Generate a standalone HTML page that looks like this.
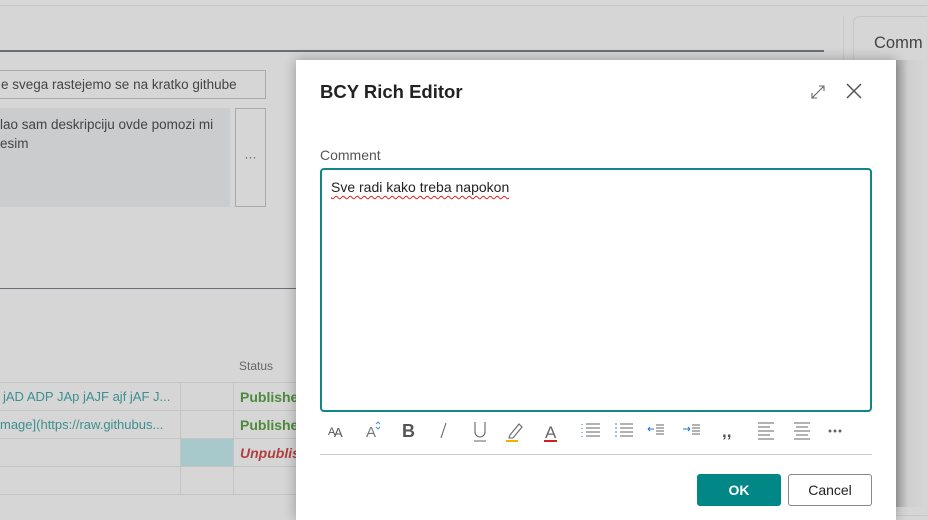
<!DOCTYPE html>
<html><head><meta charset="utf-8">
<style>
*{box-sizing:border-box;margin:0;padding:0}
body{width:927px;height:507px;overflow:hidden;background:#d6d6d6;font-family:"Liberation Sans",sans-serif;position:relative}
.abs{position:absolute}
.bg-t{color:#444;font-size:13.5px}
</style></head><body>
<div class="abs" style="left:0;top:0;width:927px;height:6px;border-bottom:1px solid #c6c6c6;background:#d8d8d8"></div>
<div class="abs" style="left:0;top:50px;width:824px;height:2px;background:#6b6f78"></div>
<div class="abs" style="left:843px;top:16px;width:1px;height:491px;background:#c8c8c8"></div>
<div class="abs" style="left:853px;top:16px;width:80px;height:500px;border:1px solid #c6c6c6;border-radius:6px;background:#d6d6d6"></div>
<div class="abs" style="left:874px;top:34px;font-size:16.5px;color:#444">Comm</div>
<div class="abs bg-t" style="left:-2px;top:70px;width:268px;height:29px;border:1px solid #aaa;padding:6px 0 0 2px">e svega rastejemo se na kratko githube</div>
<div class="abs bg-t" style="left:0;top:108px;width:230px;height:99px;background:#cbcccd;padding:7px 0 0 0;line-height:19px">lao sam deskripciju ovde pomozi mi<br>esim</div>
<div class="abs" style="left:235px;top:108px;width:31px;height:99px;border:1px solid #aaa;text-align:center;line-height:96px;color:#555;font-size:12px">···</div>
<div class="abs" style="left:0;top:288px;width:300px;height:1px;background:#6b6f78"></div>
<div class="abs" style="left:239px;top:359px;font-size:12px;color:#666">Status</div>
<div class="abs" style="left:0;top:382px;width:300px;height:1px;background:#c4c4c4"></div>
<div class="abs" style="left:0;top:410px;width:300px;height:1px;background:#c4c4c4"></div>
<div class="abs" style="left:0;top:438px;width:300px;height:1px;background:#c4c4c4"></div>
<div class="abs" style="left:0;top:466px;width:300px;height:1px;background:#c4c4c4"></div>
<div class="abs" style="left:0;top:494px;width:300px;height:1px;background:#c4c4c4"></div>
<div class="abs" style="left:180px;top:382px;width:1px;height:112px;background:#c4c4c4"></div>
<div class="abs" style="left:233px;top:382px;width:1px;height:112px;background:#c4c4c4"></div>
<div class="abs" style="left:181px;top:439px;width:52px;height:27px;background:#a7c9cc"></div>
<div class="abs" style="left:3px;top:389px;font-size:13px;color:#3e8e8e;white-space:nowrap">jAD ADP JAp jAJF ajf jAF J...</div>
<div class="abs" style="left:0;top:417px;font-size:13px;color:#3e8e8e;white-space:nowrap">mage](https://raw.githubus...</div>
<div class="abs" style="left:240px;top:389px;font-size:14px;font-weight:bold;color:#4c8a3c">Published</div>
<div class="abs" style="left:240px;top:417px;font-size:14px;font-weight:bold;color:#4c8a3c">Published</div>
<div class="abs" style="left:240px;top:445px;font-size:14px;font-weight:bold;font-style:italic;color:#b04040">Unpublished</div>

<div class="abs" style="left:896px;top:60px;width:30px;height:447px;background:linear-gradient(90deg,#a8a8a8,#cfcfcf 40%,#d6d6d6)"></div>
<div class="abs" style="left:296px;top:60px;width:600px;height:460px;background:#fff;box-shadow:0 0 12px rgba(0,0,0,.3)">
  <div class="abs" style="left:24px;top:21px;font-size:18.5px;font-weight:bold;color:#222">BCY Rich Editor</div>
  <svg class="abs" style="left:513px;top:23px" width="18" height="18" viewBox="0 0 18 18" fill="none" stroke="#666" stroke-width="1.1"><path d="M3 15L15 3M10 3h5v5M3 10v5h5"/></svg>
  <svg class="abs" style="left:549px;top:22px" width="18" height="18" viewBox="0 0 18 18" stroke="#555" stroke-width="1.5"><path d="M2 2L16 16M16 2L2 16"/></svg>
  <div class="abs" style="left:24px;top:87px;font-size:14px;color:#555">Comment</div>
  <div class="abs" style="left:24px;top:108px;width:552px;height:244px;border:2px solid #128585;border-radius:4px;padding:9px 9px;font-size:14px;color:#222"><span style="text-decoration:underline wavy #e02020;text-underline-offset:3px;text-decoration-thickness:1px">Sve radi kako treba napokon</span></div>
  <svg class="abs" style="left:30px;top:358px" width="530" height="26" viewBox="0 0 530 26" fill="none" stroke="#666" stroke-width="1.1" font-family="Liberation Sans">
    <text x="2" y="17" font-size="11" fill="#555" stroke="none">A</text><text x="8" y="19" font-size="13" fill="#555" stroke="none">A</text>
    <text x="40" y="19" font-size="15" fill="#777" stroke="none">A</text><path d="M50 6l2-2 2 2M50 9l2 2 2-2" stroke="#4a8fd8" stroke-width="1"/>
    <text x="76" y="19" font-size="18" font-weight="bold" fill="#555" stroke="none">B</text>
    <path d="M120 5l-5 15"/>
    <path d="M149 4v10a5 5 0 0 0 10 0V4M148 23h12"/>
    <path d="M184 17l9-11 3 3-9 11h-4z"/><path d="M180 23h12" stroke="#f0b000" stroke-width="2"/>
    <text x="219" y="20" font-size="17" fill="#666" stroke="none">A</text><path d="M218 23h13" stroke="#d02020" stroke-width="2"/>
    <path d="M260 6h14M260 10h14M260 14h14M260 18h14"/><path d="M256 6v13" stroke="#4a8fd8" stroke-dasharray="1 3"/>
    <path d="M294 6h13M294 10h13M294 14h13M294 18h13"/><path d="M290 5v14" stroke="#4a8fd8" stroke-dasharray="2 2"/>
    <path d="M322 11h6M322 11l2-2M322 11l2 2" stroke="#2a7ad0"/><path d="M330 7h8M330 10h8M330 13h8M330 16h8"/>
    <path d="M357 11h7M364 11l-2-2M364 11l-2 2" stroke="#2a7ad0"/><path d="M366 7h8M366 10h8M366 13h8M366 16h8"/>
    <text x="396" y="19" font-size="17" font-weight="bold" fill="#555" stroke="none">,,</text>
    <path d="M432 5h16M432 9h12M432 13h16M432 17h12M432 21h16"/>
    <path d="M468 5h16M470 9h12M468 13h16M470 17h12M468 21h16"/>
    <circle cx="504" cy="13" r=".9" fill="#333"/><circle cx="509" cy="13" r=".9" fill="#333"/><circle cx="514" cy="13" r=".9" fill="#333"/>
  </svg>
  <div class="abs" style="left:24px;top:394px;width:552px;height:1px;background:#c8c8c8"></div>
  <div class="abs" style="left:401px;top:414px;width:84px;height:32px;background:#018786;border-radius:3px;color:#fff;font-weight:bold;font-size:14px;text-align:center;line-height:32px">OK</div>
  <div class="abs" style="left:492px;top:414px;width:84px;height:32px;border:1px solid #888;border-radius:3px;color:#222;font-size:14px;text-align:center;line-height:30px">Cancel</div>
</div>
</body></html>
